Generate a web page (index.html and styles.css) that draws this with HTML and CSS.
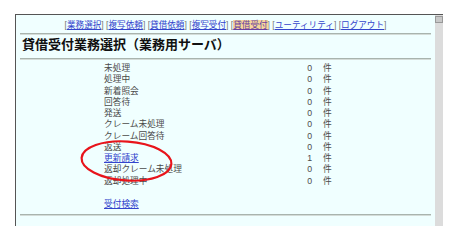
FILE: index.html
```html
<!DOCTYPE html>
<html lang="ja">

<head>
    <meta charset="UTF-8">
    <title>貸借受付業務選択</title>
    <link rel="stylesheet" href="styles.css">
</head>

<body>
    <div class="frame">
        <div class="page">
            <div class="nav">
                [<a href="#">業務選択</a>]
                [<a href="#">複写依頼</a>]
                [<a href="#">貸借依頼</a>]
                [<a href="#">複写受付</a>]
                [<a href="#" class="current">貸借受付</a>]
                [<a href="#">ユーティリティ</a>]
                [<a href="#">ログアウト</a>]
            </div>
            <hr>
            <h1>貸借受付業務選択（業務用サーバ）</h1>
            <hr>

            <div class="status-list">
                <span>未処理</span><span class="num">0</span><span>件</span>
                <span>処理中</span><span class="num">0</span><span>件</span>
                <span>新着照会</span><span class="num">0</span><span>件</span>
                <span>回答待</span><span class="num">0</span><span>件</span>
                <span>発送</span><span class="num">0</span><span>件</span>
                <span>クレーム未処理</span><span class="num">0</span><span>件</span>
                <span>クレーム回答待</span><span class="num">0</span><span>件</span>
                <span>返送</span><span class="num">0</span><span>件</span>
                <span><a href="#">更新請求</a></span><span class="num">1</span><span>件</span>
                <span>返却クレーム未処理</span><span class="num">0</span><span>件</span>
                <span>返却処理中</span><span class="num">0</span><span>件</span>
            </div>

            <div class="search"><a href="#">受付検索</a></div>
            <hr>
        </div>
        <div class="scrollbar">
            <div class="scroll-btn"></div>
        </div>

        <!-- annotation circle -->
        <svg class="mark" width="95" height="44" viewBox="0 0 95 44">
            <ellipse cx="47.5" cy="22" rx="45" ry="19.5" fill="none" stroke="#e8141b" stroke-width="2.2"
                transform="rotate(4 47.5 22)" />
        </svg>
    </div>
</body>

</html>
```

FILE: styles.css
```css
body {
    margin: 0;
    background-color: #fff;
    font-family: "Liberation Sans", "Noto Sans CJK JP", sans-serif;
    font-size: 9px;
    color: #4a4a4a;
}

.frame {
    position: relative;
    display: flex;
    width: 427px;
    height: 211px;
    margin: 14px 0 0 15px;
    border-top: 1px solid #555;
    border-left: 1px solid #555;
}

.page {
    flex: 1;
    background-color: #f0ffff;
    padding: 3px 4px 0 4px;
}

.nav {
    text-align: center;
    font-size: 8.6px;
    line-height: 14px;
    color: #777;
}

.nav a {
    color: #3344cc;
}

.nav a.current {
    background-color: #f7d79a;
    color: #6a3fa0;
}

hr {
    margin: 0;
    border: none;
    border-top: 1px solid #a9b4ae;
    border-bottom: 1px solid #d4dcd8;
}

.nav + hr {
    margin-top: 1px;
}

h1 {
    margin: 0;
    padding: 2px 0 5px 2px;
    font-size: 13px;
    line-height: 16px;
    color: #111;
}

.status-list {
    display: grid;
    grid-template-columns: 200px 8px auto;
    margin: 3px 0 0 84px;
    line-height: 11.25px;
    font-size: 8.7px;
}

.num {
    text-align: right;
}

.num + span {
    margin-left: 11px;
}

.status-list a,
.search a {
    color: #3344cc;
}

.search {
    margin: 12px 0 0 84px;
    font-size: 8.7px;
    line-height: 11px;
    padding-bottom: 4px;
}

.scrollbar {
    width: 8px;
    background-color: #dcdcdc;
}

.scroll-btn {
    height: 7px;
    margin-top: 1px;
    background-color: #c8c8c8;
    border: 1px solid #999;
    box-sizing: border-box;
}

.mark {
    position: absolute;
    left: 63px;
    top: 124px;
}
```
